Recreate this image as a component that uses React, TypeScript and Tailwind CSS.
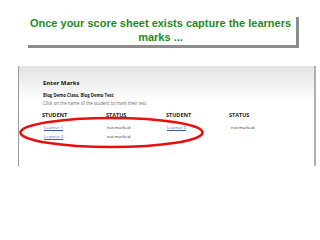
import React from "react";

function App() {
  const rows = [
    ["Learner 1", "not marked", "Learner 3", "not marked"],
    ["Learner 2", "not marked", "", ""],
  ];

  return (
    <div className="relative w-[320px] h-[240px] bg-white overflow-hidden font-['Liberation_Sans',sans-serif]">
      {/* title box */}
      <div className="ml-[25px] mt-[14px] w-[271px] h-[31px] bg-white shadow-[3px_3px_0_#8c8c8c] flex flex-col items-center justify-center">
        <p className="text-[11px] leading-[14px] font-bold text-[#1e8c1e] text-center whitespace-nowrap">
          Once your score sheet exists capture the learners
        </p>
        <p className="text-[11px] leading-[14px] font-bold text-[#1e8c1e] text-center">
          marks ...
        </p>
      </div>

      {/* screenshot panel */}
      <div className="ml-[18px] mt-[21px] w-[298px] h-[100px] border-l border-[#9a9a9a] border-r-2 border-r-[#b0b0b0] bg-[linear-gradient(to_bottom,#e3e3e3,#ffffff_36px)] pl-[24px] pt-[13px] font-['Open_Sans',sans-serif]">
        <p className="text-[6px] leading-[8px] font-bold text-[#111]">Enter Marks</p>
        <p className="mt-[5px] text-[4.3px] leading-[6px] font-bold text-[#222]">
          Blog Demo Class, Blog Demo Test
        </p>
        <p className="mt-[2px] text-[4.4px] leading-[6px] text-[#666]">
          Click on the name of the student to mark their test
        </p>
        <div className="mt-[6px] -ml-[1px] grid grid-cols-[64px_60px_63px_auto] text-[5.5px] leading-[7px] font-bold text-[#222]">
          <span>STUDENT</span>
          <span>STATUS</span>
          <span>STUDENT</span>
          <span>STATUS</span>
        </div>
        <div className="mt-[5px] -ml-[1px] flex flex-col gap-[3px]">
          {rows.map((row, index) => (
            <div
              key={index}
              className="grid grid-cols-[64px_60px_63px_auto] text-[4.3px] leading-[6px]"
            >
              <span className="pl-[2px] text-[#3b5ab0] underline">{row[0]}</span>
              <span className="pl-[1px] text-[#333]">{row[1]}</span>
              <span className="pl-[1px] text-[#3b5ab0] underline">{row[2]}</span>
              <span className="pl-[2px] text-[#333]">{row[3]}</span>
            </div>
          ))}
        </div>
      </div>

      {/* red highlight ellipse */}
      <svg
        className="absolute left-0 top-0 pointer-events-none"
        width="320"
        height="240"
        viewBox="0 0 320 240"
      >
        <ellipse
          cx="111.5"
          cy="132.5"
          rx="91"
          ry="14.5"
          fill="none"
          stroke="#e8100f"
          strokeWidth="2.6"
        />
      </svg>
    </div>
  );
}

export default App;
